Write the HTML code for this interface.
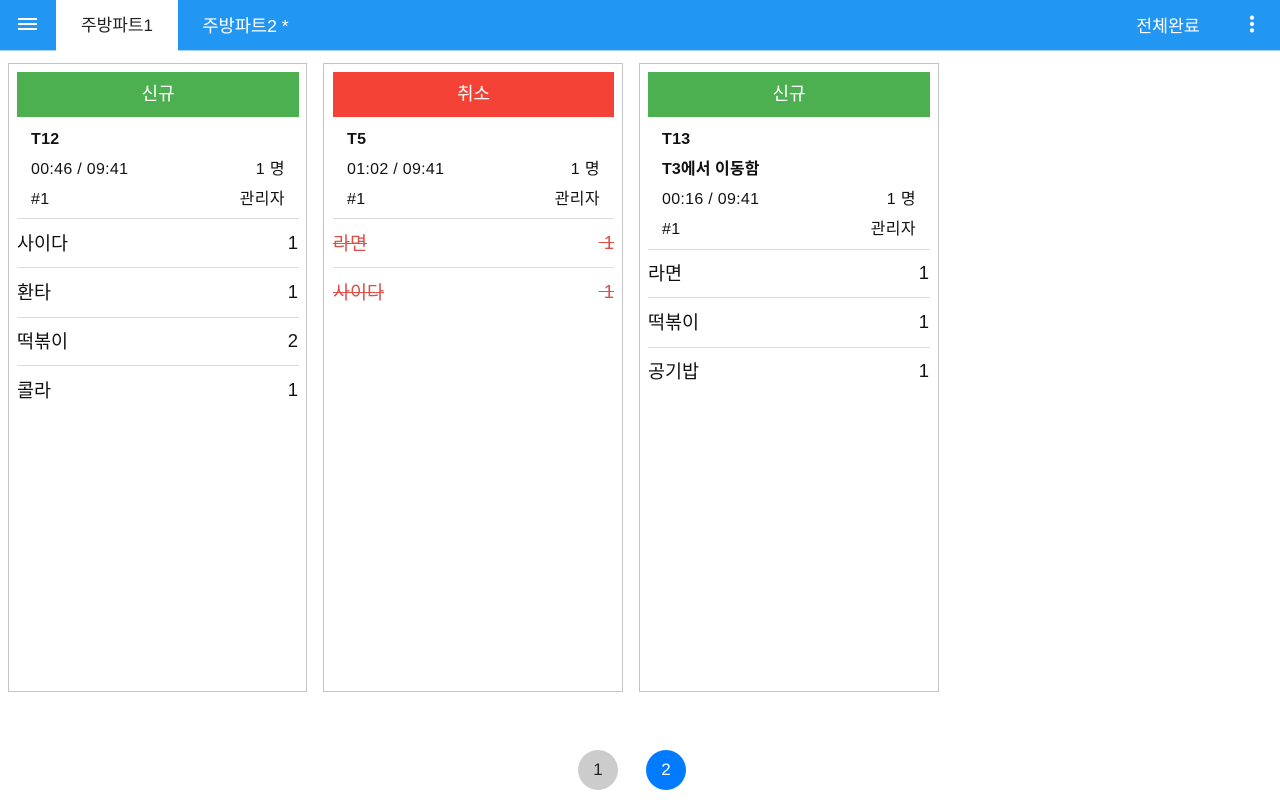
<!DOCTYPE html>
<html lang="ko">
<head>
<meta charset="utf-8">
<title>주방파트</title>
<style>
html,body{margin:0;padding:0;width:1280px;height:800px;overflow:hidden;background:#fff;}
body{font-family:"Liberation Sans","Noto Sans CJK KR",sans-serif;color:#111;position:relative;}
.a{position:absolute;white-space:nowrap;}
.bar{left:0;top:0;width:1280px;height:50px;background:#2196f3;border-bottom:1px solid #a9d6f8;}
.tab{top:0;height:51px;line-height:52px;font-size:17px;text-align:center;}
.card{top:63px;height:627px;border:1px solid #c4c4c4;background:#fff;}
.hd{top:72px;height:45px;line-height:44px;color:#fff;font-size:18px;text-align:center;}
.t{font-size:16px;letter-spacing:.3px;line-height:20px;height:20px;}
.k{font-size:16px;letter-spacing:.4px;}
.b{font-weight:bold;}
.r{text-align:right;}
.i{font-size:18.5px;line-height:24px;height:24px;}
.line{height:1px;background:#dcdcdc;}
.x{color:#dc4f47;text-decoration:line-through;}
.pg{top:750px;width:40px;height:40px;border-radius:20px;text-align:center;line-height:40px;font-size:17px;}
</style>
</head>
<body>
<div class="a bar"></div>
<svg class="a" style="left:18px;top:15px" width="20" height="18" viewBox="0 0 20 18"><path d="M0 4H19M0 9H19M0 14H19" stroke="#fff" stroke-width="2" fill="none"/></svg>
<div class="a tab" style="left:56px;width:122px;background:#fff;color:#222">주방파트1</div>
<div class="a tab" style="left:178px;width:135px;color:#fff;font-size:17.6px">주방파트2 *</div>
<div class="a tab" style="left:1128px;width:80px;color:#fff;font-size:17.3px">전체완료</div>
<svg class="a" style="left:1246px;top:14px" width="12" height="20" viewBox="0 0 12 20"><circle cx="6" cy="3.6" r="2.1" fill="#fff"/><circle cx="6" cy="10" r="2.1" fill="#fff"/><circle cx="6" cy="16.4" r="2.1" fill="#fff"/></svg>

<!-- card 1 -->
<div class="a card" style="left:8px;width:297px"></div>
<div class="a hd" style="left:17px;width:282px;background:#4caf50">신규</div>
<div class="a t b" style="left:31px;top:130px">T12</div>
<div class="a t" style="left:31px;top:160px">00:46 / 09:41</div>
<div class="a t k r" style="left:185px;width:100px;top:160px">1 명</div>
<div class="a t" style="left:31px;top:190px">#1</div>
<div class="a t k r" style="left:185px;width:100px;top:190px">관리자</div>
<div class="a line" style="left:17px;width:282px;top:218px"></div>
<div class="a i" style="left:17px;top:232px">사이다</div><div class="a i r" style="left:198px;width:100px;top:231px">1</div>
<div class="a line" style="left:17px;width:282px;top:267px"></div>
<div class="a i" style="left:17px;top:281px">환타</div><div class="a i r" style="left:198px;width:100px;top:280px">1</div>
<div class="a line" style="left:17px;width:282px;top:317px"></div>
<div class="a i" style="left:17px;top:330px">떡볶이</div><div class="a i r" style="left:198px;width:100px;top:329px">2</div>
<div class="a line" style="left:17px;width:282px;top:365px"></div>
<div class="a i" style="left:17px;top:379px">콜라</div><div class="a i r" style="left:198px;width:100px;top:378px">1</div>

<!-- card 2 -->
<div class="a card" style="left:323px;width:298px"></div>
<div class="a hd" style="left:333px;width:281px;background:#f44336">취소</div>
<div class="a t b" style="left:347px;top:130px">T5</div>
<div class="a t" style="left:347px;top:160px">01:02 / 09:41</div>
<div class="a t k r" style="left:500px;width:100px;top:160px">1 명</div>
<div class="a t" style="left:347px;top:190px">#1</div>
<div class="a t k r" style="left:500px;width:100px;top:190px">관리자</div>
<div class="a line" style="left:333px;width:281px;top:218px"></div>
<div class="a i x" style="left:333px;top:232px">라면</div><div class="a i r x" style="left:514px;width:100px;top:231px">&nbsp;1</div>
<div class="a line" style="left:333px;width:281px;top:267px"></div>
<div class="a i x" style="left:333px;top:281px">사이다</div><div class="a i r x" style="left:514px;width:100px;top:280px">&nbsp;1</div>

<!-- card 3 -->
<div class="a card" style="left:639px;width:298px"></div>
<div class="a hd" style="left:648px;width:282px;background:#4caf50">신규</div>
<div class="a t b" style="left:662px;top:130px">T13</div>
<div class="a t b" style="left:662px;top:160px;letter-spacing:.1px">T3에서 이동함</div>
<div class="a t" style="left:662px;top:190px">00:16 / 09:41</div>
<div class="a t k r" style="left:816px;width:100px;top:190px">1 명</div>
<div class="a t" style="left:662px;top:220px">#1</div>
<div class="a t k r" style="left:816px;width:100px;top:220px">관리자</div>
<div class="a line" style="left:648px;width:282px;top:249px"></div>
<div class="a i" style="left:648px;top:262px">라면</div><div class="a i r" style="left:829px;width:100px;top:261px">1</div>
<div class="a line" style="left:648px;width:282px;top:297px"></div>
<div class="a i" style="left:648px;top:311px">떡볶이</div><div class="a i r" style="left:829px;width:100px;top:310px">1</div>
<div class="a line" style="left:648px;width:282px;top:347px"></div>
<div class="a i" style="left:648px;top:360px">공기밥</div><div class="a i r" style="left:829px;width:100px;top:359px">1</div>

<div class="a pg" style="left:578px;background:#ccc;color:#222">1</div>
<div class="a pg" style="left:646px;background:#007bff;color:#fff">2</div>
</body>
</html>
